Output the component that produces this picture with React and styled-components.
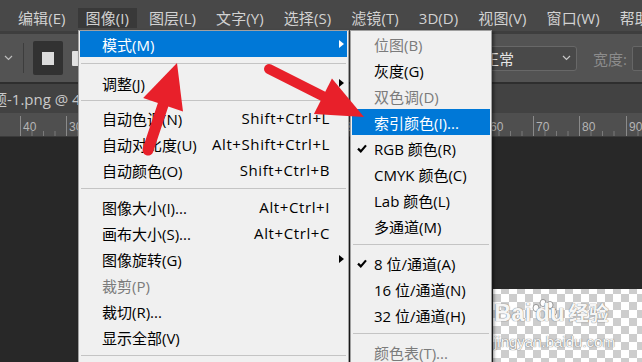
import React from 'react';
import styled, { createGlobalStyle } from 'styled-components';

const FONT = `"Open Sans", "Noto Sans CJK SC", sans-serif`;

const GlobalStyle = createGlobalStyle`
  html, body { margin: 0; padding: 0; background: #282828; }
  body { width: 642px; height: 362px; overflow: hidden; }
`;

const Window = styled.div`
  position: relative;
  width: 642px;
  height: 362px;
  overflow: hidden;
  display: flex;
  flex-direction: column;
  background: #282828;
  font-family: ${FONT};
`;

const MenuBar = styled.div`
  flex: none;
  height: 34px;
  box-sizing: border-box;
  padding: 8px 0 0 10px;
  display: flex;
  align-items: flex-start;
  gap: 4px;
  background: #484848;
  border-bottom: 3px solid #3e3e3e;
`;

const MenuTitle = styled.div`
  flex: none;
  height: 20px;
  line-height: 20px;
  padding: 0 8px;
  font-size: 15px;
  letter-spacing: 0.08px;
  color: #d2d2d2;
  white-space: nowrap;
  background: ${p => (p.$open ? '#393939' : 'transparent')};
`;

const OptionsBar = styled.div`
  flex: none;
  height: 50px;
  box-sizing: border-box;
  display: flex;
  align-items: center;
  padding-left: 4px;
  background: #535353;
  border-bottom: 2px solid #2e2e2e;
`;

const Divider = styled.div`
  flex: none;
  width: 1px;
  height: 30px;
  margin: 0 9px 0 10px;
  background: #3d3d3d;
`;

const ToolSwatch = styled.div`
  flex: none;
  width: 30px;
  height: 34px;
  display: flex;
  align-items: center;
  justify-content: center;
  background: #323232;
  border-radius: 2px;
  &::after {
    content: '';
    width: 12px;
    height: 13px;
    background: #dcdcdc;
  }
`;

const ToolStub = styled.div`
  flex: none;
  width: 8px;
  height: 15px;
  margin-left: 9px;
  background: #e2e2e2;
  border-radius: 1px;
`;

const RightGroup = styled.div`
  margin-left: auto;
  margin-right: -30px;
  display: flex;
  align-items: center;
`;

const Dropdown = styled.div`
  flex: none;
  width: 104px;
  height: 25px;
  box-sizing: border-box;
  padding: 0 5px 0 10px;
  display: flex;
  align-items: center;
  justify-content: space-between;
  border: 1px solid #686868;
  border-radius: 3px;
  background: #494949;
  color: #e6e6e6;
  font-size: 15px;
`;

const FieldLabel = styled.span`
  flex: none;
  margin-left: 16px;
  font-size: 15px;
  color: #8c8c8c;
`;

const FieldBox = styled.div`
  flex: none;
  width: 40px;
  height: 25px;
  margin-left: 5px;
  box-sizing: border-box;
  border: 1px solid #666;
  border-radius: 2px;
  background: #494949;
`;

const TabBar = styled.div`
  flex: none;
  height: 29px;
  display: flex;
  align-items: center;
  background: #424242;
  overflow: hidden;
`;

const TabTitle = styled.span`
  margin-left: -8px;
  font-size: 15px;
  color: #c9c9c9;
  white-space: nowrap;
`;

const RulerWrap = styled.div`
  flex: none;
  height: 23px;
  background: #4f4f4f;
  border-bottom: 1px solid #3a3a3a;
`;

const Canvas = styled.div`
  flex: 1;
  display: flex;
  justify-content: flex-end;
  align-items: flex-end;
  background: #282828;
`;

const Doc = styled.div`
  position: relative;
  width: 149px;
  height: 73px;
  background-color: #fff;
  background-image: conic-gradient(#cdcdcd 25%, #fff 0 50%, #cdcdcd 0 75%, #fff 0);
  background-size: 16px 16px;
  background-position: 0 -3px;
  overflow: hidden;
`;

const Watermark = styled.div`
  position: absolute;
  left: 1px;
  top: 8px;
  color: rgba(255, 255, 255, 0.95);
  text-shadow: 0 0 1px rgba(110, 110, 110, 0.8), 0 0 1px rgba(110, 110, 110, 0.8);
  white-space: nowrap;
`;

const WmBrand = styled.div`
  display: flex;
  align-items: flex-end;
  font-family: "Liberation Sans", "Noto Sans CJK SC", sans-serif;
  font-weight: 700;
  font-size: 24px;
  line-height: 32px;
`;

const WmCjk = styled.span`
  margin-left: 4px;
  font-size: 20px;
  font-weight: 700;
  font-family: "Noto Sans CJK SC", sans-serif;
`;

const WmUrl = styled.div`
  margin-top: 4px;
  font-family: "Liberation Sans", sans-serif;
  font-size: 15px;
`;

const Menu = styled.div`
  position: absolute;
  top: 30px;
  left: ${p => p.$left}px;
  width: ${p => p.$width}px;
  height: 340px;
  box-sizing: border-box;
  padding: 0 1px;
  background: #f0f0f0;
  border: 1px solid #a0a0a0;
  box-shadow: 2px 2px 3px rgba(0, 0, 0, 0.45);
  font-size: 15px;
`;

const Row = styled.div`
  height: 26px;
  display: flex;
  align-items: center;
  padding-left: ${p => p.$indent}px;
  color: ${p => (p.$active ? '#fff' : p.$disabled ? '#7b7b7b' : '#000')};
  background: ${p => (p.$active ? '#0078d7' : 'transparent')};
  white-space: nowrap;
`;

const Label = styled.span`
  flex: 1;
`;

const Shortcut = styled.span`
  flex: none;
  letter-spacing: 0.6px;
`;

const ArrowCell = styled.span`
  flex: none;
  width: 17px;
  display: flex;
  justify-content: flex-end;
  padding-right: 3px;
  box-sizing: border-box;
`;

const SubArrow = styled.span`
  width: 0;
  height: 0;
  border-left: 5px solid currentColor;
  border-top: 4.5px solid transparent;
  border-bottom: 4.5px solid transparent;
`;

const CheckCell = styled.span`
  flex: none;
  width: 17px;
  display: flex;
  align-items: center;
`;

const Separator = styled.div`
  height: ${p => p.$h || 11}px;
  display: flex;
  align-items: center;
  margin: 0 1px;
  &::after {
    content: '';
    flex: 1;
    height: 1px;
    background: #c4c4c4;
  }
`;

const Overlay = styled.svg`
  position: absolute;
  left: 0;
  top: 0;
  pointer-events: none;
`;

const menuTitles = ['编辑(E)', '图像(I)', '图层(L)', '文字(Y)', '选择(S)', '滤镜(T)', '3D(D)', '视图(V)', '窗口(W)', '帮助(H)'];

const imageMenu = [
  { label: '模式(M)', sub: true, active: true },
  { sep: true, h: 13 },
  { label: '调整(J)', sub: true },
  { sep: true, h: 9 },
  { label: '自动色调(N)', key: 'Shift+Ctrl+L' },
  { label: '自动对比度(U)', key: 'Alt+Shift+Ctrl+L' },
  { label: '自动颜色(O)', key: 'Shift+Ctrl+B' },
  { sep: true },
  { label: '图像大小(I)...', key: 'Alt+Ctrl+I' },
  { label: '画布大小(S)...', key: 'Alt+Ctrl+C' },
  { label: '图像旋转(G)', sub: true },
  { label: '裁剪(P)', disabled: true },
  { label: '裁切(R)...' },
  { label: '显示全部(V)' },
  { sep: true },
];

const modeMenu = [
  { label: '位图(B)', disabled: true },
  { label: '灰度(G)' },
  { label: '双色调(D)', disabled: true },
  { label: '索引颜色(I)...', active: true },
  { label: 'RGB 颜色(R)', checked: true },
  { label: 'CMYK 颜色(C)' },
  { label: 'Lab 颜色(L)' },
  { label: '多通道(M)' },
  { sep: true },
  { label: '8 位/通道(A)', checked: true },
  { label: '16 位/通道(N)' },
  { label: '32 位/通道(H)' },
  { sep: true },
  { label: '颜色表(T)...', disabled: true },
];

const rulerMarks = [
  [20, '40'], [66, '30'], [112, '20'], [158, '10'], [204, '0'], [250, '10'],
  [296, '20'], [342, '30'], [388, '40'], [441, '50'], [487, '60'], [533, '70'],
  [579, '80'], [626, '90'],
];

const Ruler = () => (
  <RulerWrap>
    <svg width="642" height="23">
      {rulerMarks.map(([x, n]) => (
        <g key={x}>
          <line x1={x + 0.5} y1="3" x2={x + 0.5} y2="23" stroke="#8a8a8a" />
          <text x={x + 3} y="18" fill="#b4b4b4" fontSize="12" fontFamily="Liberation Sans, sans-serif">{n}</text>
          {[1, 2, 3].map(i => (
            <line key={i} x1={x + 0.5 + i * 11.5} y1="18" x2={x + 0.5 + i * 11.5} y2="23" stroke="#7a7a7a" />
          ))}
        </g>
      ))}
    </svg>
  </RulerWrap>
);

const Check = () => (
  <svg width="10" height="9" viewBox="0 0 10 9">
    <path d="M1 4.6 L3.8 7.4 L9 1.4" fill="none" stroke="#000" strokeWidth="2.2" />
  </svg>
);

const Chevron = ({ color = '#bdbdbd' }) => (
  <svg width="9" height="6" viewBox="0 0 9 6">
    <path d="M1 1 L4.5 4.5 L8 1" fill="none" stroke={color} strokeWidth="1.2" />
  </svg>
);

const arrowShape = (tail, tip, headLen, halfW) => {
  const dx = tip[0] - tail[0];
  const dy = tip[1] - tail[1];
  const len = Math.hypot(dx, dy);
  const ux = dx / len;
  const uy = dy / len;
  const bx = tip[0] - ux * headLen;
  const by = tip[1] - uy * headLen;
  const head = [
    tip,
    [bx - uy * halfW, by + ux * halfW],
    [bx + uy * halfW, by - ux * halfW],
  ].map(p => p.join(',')).join(' ');
  return { head, base: [bx + ux * 4, by + uy * 4] };
};

const RedArrow = ({ tail, tip, headLen, halfW, width }) => {
  const { head, base } = arrowShape(tail, tip, headLen, halfW);
  return (
    <g fill="#e8202a" stroke="#e8202a">
      <line x1={tail[0]} y1={tail[1]} x2={base[0]} y2={base[1]} strokeWidth={width} strokeLinecap="round" />
      <polygon points={head} stroke="none" />
    </g>
  );
};

export default function App() {
  return (
    <>
      <GlobalStyle />
      <Window>
        <MenuBar>
          {menuTitles.map(t => (
            <MenuTitle key={t} $open={t === '图像(I)'}>{t}</MenuTitle>
          ))}
        </MenuBar>
        <OptionsBar>
          <Chevron />
          <Divider />
          <ToolSwatch />
          <ToolStub />
          <RightGroup>
            <Dropdown>
              <span>正常</span>
              <Chevron color="#c8c8c8" />
            </Dropdown>
            <FieldLabel>宽度:</FieldLabel>
            <FieldBox />
          </RightGroup>
        </OptionsBar>
        <TabBar>
          <TabTitle>题-1.png @ 40% (RGB/8#)</TabTitle>
        </TabBar>
        <Ruler />
        <Canvas>
          <Doc>
            <Watermark>
              <WmBrand>
                <span>Bai</span>
                <svg width="26" height="30" viewBox="0 0 26 30">
                  <g fill="rgba(255,255,255,0.95)" stroke="rgba(120,120,120,0.7)">
                    <ellipse cx="5" cy="9" rx="3" ry="3.6" />
                    <ellipse cx="12" cy="4" rx="3" ry="3.6" />
                    <ellipse cx="19" cy="6" rx="3" ry="3.6" />
                    <ellipse cx="23" cy="13" rx="2.6" ry="3.2" />
                  </g>
                </svg>
                <span style={{ marginLeft: -22 }}>du</span>
                <WmCjk>经验</WmCjk>
              </WmBrand>
              <WmUrl>jingyan.baidu.com</WmUrl>
            </Watermark>
          </Doc>
        </Canvas>

        <Menu $left={78} $width={271}>
          {imageMenu.map((it, i) =>
            it.sep ? (
              <Separator key={i} $h={it.h} />
            ) : (
              <Row key={i} $indent={22} $active={it.active} $disabled={it.disabled}>
                <Label>{it.label}</Label>
                {it.key && <Shortcut>{it.key}</Shortcut>}
                <ArrowCell>{it.sub && <SubArrow />}</ArrowCell>
              </Row>
            )
          )}
        </Menu>

        <Menu $left={350} $width={142}>
          {modeMenu.map((it, i) =>
            it.sep ? (
              <Separator key={i} />
            ) : (
              <Row key={i} $indent={5} $active={it.active} $disabled={it.disabled}>
                <CheckCell>{it.checked && <Check />}</CheckCell>
                <Label>{it.label}</Label>
              </Row>
            )
          )}
        </Menu>

        <Overlay width="642" height="362" viewBox="0 0 642 362">
          <RedArrow tail={[148, 150]} tip={[177, 63]} headLen={44} halfW={21} width={11} />
          <RedArrow tail={[269, 69]} tip={[364, 117]} headLen={46} halfW={20} width={10} />
        </Overlay>
      </Window>
    </>
  );
}
